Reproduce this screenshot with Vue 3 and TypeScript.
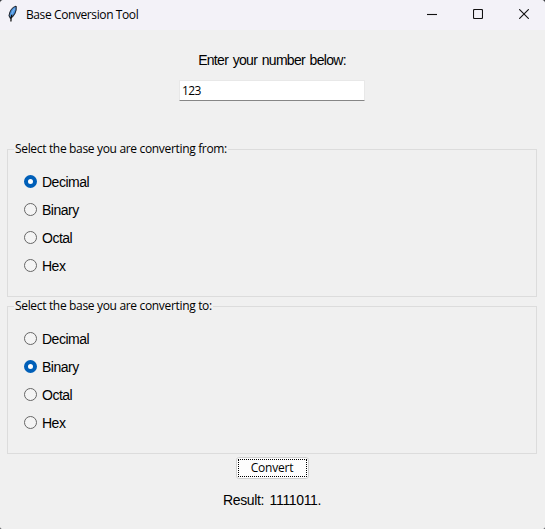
<script setup lang="ts">
import { computed, ref } from 'vue'

interface Base {
  label: string
  radix: number
}

const bases: Base[] = [
  { label: 'Decimal', radix: 10 },
  { label: 'Binary', radix: 2 },
  { label: 'Octal', radix: 8 },
  { label: 'Hex', radix: 16 },
]

const entry = ref('123')
const from = ref(10)
const to = ref(2)

const convert = (): string => parseInt(entry.value, from.value).toString(to.value).toUpperCase()
const output = ref(convert())
const result = computed(() => `Result: ${output.value}.`)

function run() {
  output.value = convert()
}
</script>

<template>
  <div class="window">
    <header class="titlebar">
      <svg class="feather" width="12" height="18" viewBox="0 0 12 18">
        <path d="M8.8 1.3C5.4 2.2 2.6 6.2 2 10.7L3.4 13.2C7 11.4 9.9 6.6 9.2 1.6Z" fill="#4a94e2" stroke="#20262f" stroke-width="1.1" />
        <path d="M7.8 3.6C6 5.4 4.7 8 4.2 10.4" fill="none" stroke="#7db7f0" stroke-width="1.1" />
        <path d="M4.8 9.6C4.2 11.6 4 13.6 3.9 16.4" fill="none" stroke="#111" stroke-width="1.3" />
      </svg>
      <h1 class="title">Base Conversion Tool</h1>
      <div class="controls">
        <svg width="10" height="10" viewBox="0 0 10 10"><path d="M0 5.5H10" /></svg>
        <svg width="10" height="10" viewBox="0 0 10 10"><rect x=".5" y=".5" width="9" height="9" rx="1" /></svg>
        <svg width="10" height="10" viewBox="0 0 10 10"><path d="M.2.2L9.8 9.8M9.8.2L.2 9.8" /></svg>
      </div>
    </header>

    <main class="body">
      <label class="prompt" for="number">Enter your number below:</label>
      <input id="number" v-model="entry" class="entry" type="text" />

      <section class="group">
        <h2 class="legend">Select the base you are converting from:</h2>
        <label v-for="base in bases" :key="base.radix" class="option">
          <input v-model="from" class="radio" type="radio" name="from" :value="base.radix" />
          <span class="name">{{ base.label }}</span>
        </label>
      </section>

      <section class="group">
        <h2 class="legend">Select the base you are converting to:</h2>
        <label v-for="base in bases" :key="base.radix" class="option">
          <input v-model="to" class="radio" type="radio" name="to" :value="base.radix" />
          <span class="name">{{ base.label }}</span>
        </label>
      </section>

      <button class="convert" type="button" @click="run"><span class="focus">Convert</span></button>
      <p class="result">{{ result }}</p>
    </main>
  </div>
</template>

<style>
body {
  margin: 0;
  background: #3a3c42;
}
</style>

<style scoped>
.window {
  box-sizing: border-box;
  width: 545px;
  height: 529px;
  overflow: hidden;
  border-radius: 4px 4px 2px 2px;
  background: #f0f0f0;
  color: #000;
  font-family: "Liberation Sans", sans-serif;
}
.titlebar {
  display: flex;
  align-items: center;
  box-sizing: border-box;
  height: 30px;
  padding: 0 16px 2px 7px;
  background: #f3f2f8;
}
.feather {
  flex: none;
}
.title {
  margin: 2px 0 0 7px;
  font: 12px/16px "Open Sans", sans-serif;
  letter-spacing: -0.4px;
  white-space: nowrap;
}
.controls {
  display: flex;
  gap: 36px;
  margin-left: auto;
}
.controls svg {
  fill: none;
  stroke: #111;
  stroke-width: 1.1;
}
.body {
  display: flex;
  flex-direction: column;
  align-items: center;
  padding: 21px 8px 0 7px;
}
.prompt {
  height: 18px;
  font-size: 14px;
  line-height: 18px;
  letter-spacing: -0.7px;
  word-spacing: 1.4px;
}
.entry {
  box-sizing: border-box;
  width: 186px;
  height: 21px;
  margin: 11px 0 48px;
  padding: 0 2px;
  border: 1px solid #e8e8e8;
  border-bottom-color: #868686;
  border-radius: 1px;
  outline: none;
  background: #fff;
  color: #000;
  font: 12px/18px "Open Sans", sans-serif;
  letter-spacing: -0.6px;
}
.group {
  box-sizing: border-box;
  width: 530px;
  height: 148px;
  margin-bottom: 9px;
  padding-left: 16px;
  border: 1px solid #dcdcdc;
}
.legend {
  width: max-content;
  height: 16px;
  margin: -9px 0 10px -10px;
  padding: 0 1px;
  background: #f0f0f0;
  font: 12px/16px "Open Sans", sans-serif;
  letter-spacing: -0.33px;
  white-space: nowrap;
}
.option {
  display: flex;
  align-items: center;
  height: 28px;
}
.radio {
  appearance: none;
  box-sizing: border-box;
  width: 13px;
  height: 13px;
  margin: 0 5px 0 0;
  border: 1px solid #666;
  border-radius: 50%;
  background: #f4f4f4;
}
.radio:checked {
  border: 4px solid #005fb8;
  background: #fff;
}
.name {
  padding-top: 2px;
  font-size: 14px;
  line-height: 18px;
  letter-spacing: -0.5px;
}
.convert {
  box-sizing: border-box;
  width: 73px;
  height: 22px;
  margin-top: -6px;
  padding: 1px;
  border: 1px solid #d0d0d0;
  border-radius: 3px;
  background: #fdfdfd;
  color: #000;
}
.focus {
  display: block;
  box-sizing: border-box;
  height: 18px;
  border: 1px dotted #000;
  font: 12px/16px "Open Sans", sans-serif;
  letter-spacing: -0.2px;
}
.result {
  margin: 12px 0 0;
  font-size: 14px;
  line-height: 18px;
  letter-spacing: -0.35px;
  word-spacing: 2px;
}
</style>
